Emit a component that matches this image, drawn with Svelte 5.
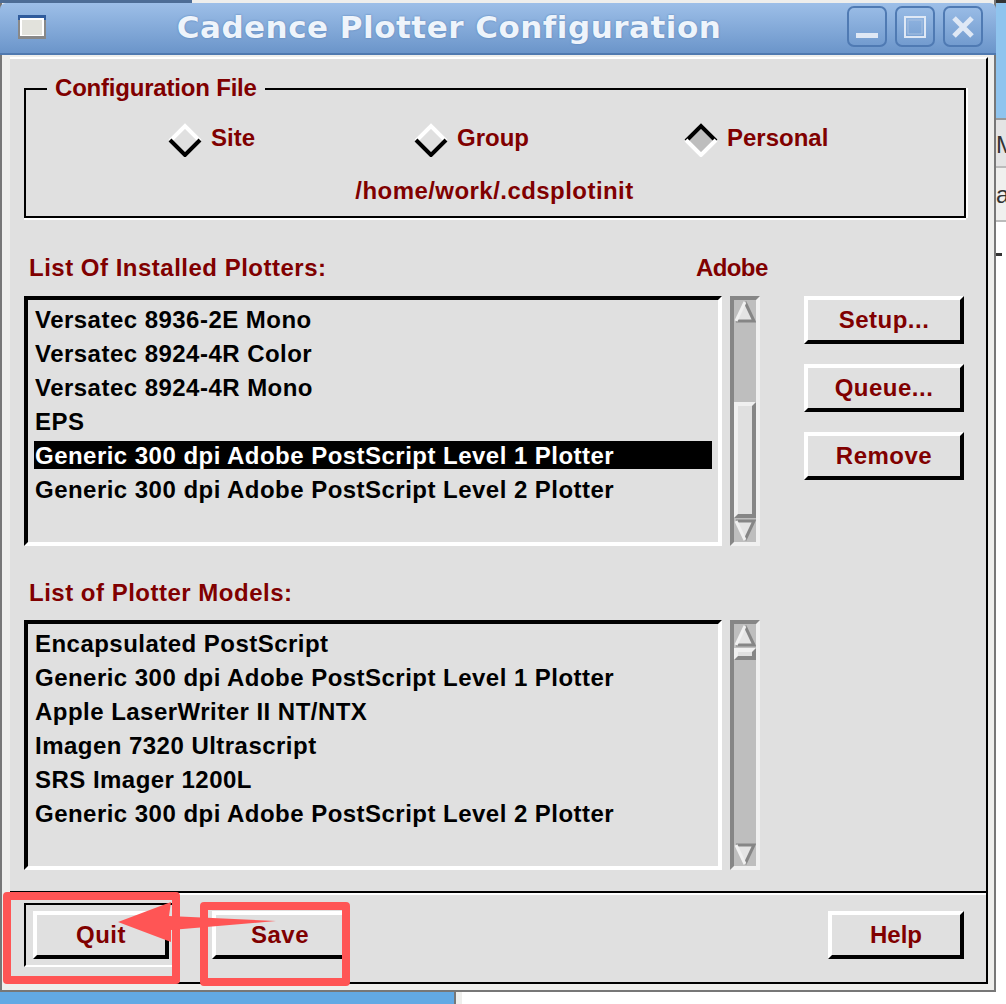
<script>
  const installed = [
    'Versatec 8936-2E Mono',
    'Versatec 8924-4R Color',
    'Versatec 8924-4R Mono',
    'EPS',
    'Generic 300 dpi Adobe PostScript Level 1 Plotter',
    'Generic 300 dpi Adobe PostScript Level 2 Plotter'
  ];
  const models = [
    'Encapsulated PostScript',
    'Generic 300 dpi Adobe PostScript Level 1 Plotter',
    'Apple LaserWriter II NT/NTX',
    'Imagen 7320 Ultrascript',
    'SRS Imager 1200L',
    'Generic 300 dpi Adobe PostScript Level 2 Plotter'
  ];
  const sources = [
    { label: 'Site', on: false },
    { label: 'Group', on: false },
    { label: 'Personal', on: true }
  ];
</script>

{#snippet diamond(on)}
  <svg class="diamond" width="34" height="34" viewBox="0 0 34 34">
    {#if on}<polygon points="17,3 31,17 17,31 3,17" fill="#bebebe" />{/if}
    <polyline points="2,18 17,3 32,18" fill="none" stroke-width="4" stroke={on ? '#000' : '#fff'} />
    <polyline points="2,17 17,32 32,17" fill="none" stroke-width="4" stroke={on ? '#fff' : '#000'} />
  </svg>
{/snippet}

{#snippet scrollbar(before, thumb)}
  <div class="scrollbar">
    <svg class="arrow" width="22" height="24" viewBox="0 0 22 24">
      <polygon points="11,2 20,21 2,21" fill="#e4e4e4" />
      <polyline points="11,2 20,21 2,21" fill="none" stroke="#868686" stroke-width="3" />
      <polyline points="2,21 11,2" fill="none" stroke="#f0f0f0" stroke-width="3" />
    </svg>
    <div style="height: {before}px"></div>
    <div class="thumb" style="height: {thumb}px"></div>
    <div class="rest"></div>
    <svg class="arrow" width="22" height="24" viewBox="0 0 22 24">
      <polygon points="11,22 20,3 2,3" fill="#e4e4e4" />
      <polyline points="2,3 20,3 11,22" fill="none" stroke="#868686" stroke-width="3" />
      <polyline points="2,3 11,22" fill="none" stroke="#f0f0f0" stroke-width="3" />
    </svg>
  </div>
{/snippet}

{#snippet listRow(items, selected)}
  <div class="list">
    {#each items as item, i}
      <div class="item" class:selected={i === selected}>{item}</div>
    {/each}
  </div>
{/snippet}

<div class="desktop">
  <div class="top-strip"></div>
  <div class="window">
    <header class="titlebar">
      <svg class="menu-icon" width="30" height="26" viewBox="0 0 30 26">
        <rect width="28" height="24" x="1" y="1" fill="#888" />
        <rect width="28" height="5" x="1" y="1" fill="#2f5b9c" />
        <rect width="24" height="18" x="3" y="4" fill="#fff" />
        <rect width="20" height="15" x="5" y="6" fill="#e2e2dc" />
      </svg>
      <h1>Cadence Plotter Configuration</h1>
      <div class="controls">
        <div class="control">
          <svg width="36" height="36" viewBox="0 0 36 36"><rect x="7" y="24" width="22" height="5" fill="#dfe8f5" /></svg>
        </div>
        <div class="control">
          <svg width="36" height="36" viewBox="0 0 36 36"><rect x="8" y="8" width="20" height="20" fill="none" stroke="#dfe8f5" stroke-width="2" /><rect x="11" y="11" width="14" height="14" fill="none" stroke="#a9c2e2" stroke-width="1" /></svg>
        </div>
        <div class="control">
          <svg width="36" height="36" viewBox="0 0 36 36"><path d="M9 9 L27 27 M27 9 L9 27" stroke="#dfe8f5" stroke-width="5" /></svg>
        </div>
      </div>
    </header>

    <div class="client">
      <section class="config">
        <span class="legend">Configuration File</span>
        <div class="radios">
          {#each sources as s}
            <div class="radio">
              {@render diamond(s.on)}
              <span>{s.label}</span>
            </div>
          {/each}
        </div>
        <div class="path">/home/work/.cdsplotinit</div>
      </section>

      <div class="list-label first">
        <span>List Of Installed Plotters:</span>
        <span class="vendor">Adobe</span>
      </div>
      <div class="list-row">
        {@render listRow(installed, 4)}
        {@render scrollbar(78, 116)}
        <div class="side-buttons">
          <button>Setup...</button>
          <button>Queue...</button>
          <button>Remove</button>
        </div>
      </div>

      <div class="list-label">
        <span>List of Plotter Models:</span>
      </div>
      <div class="list-row">
        {@render listRow(models, -1)}
        {@render scrollbar(0, 12)}
      </div>

      <footer class="footer">
        <div class="default-ring"><button class="small">Quit</button></div>
        <button class="small save">Save</button>
        <button class="small help">Help</button>
      </footer>
    </div>
  </div>

  <div class="side">
    <div class="side-cell"><span>M</span></div>
    <div class="side-cell tall"><span>a</span></div>
    <div class="tick"></div>
  </div>
  <div class="taskbar"></div>

  <div class="mark mark-quit"></div>
  <div class="mark mark-save"></div>
  <svg class="mark-arrow" width="170" height="50" viewBox="0 0 170 50">
    <polygon points="0,22 53,2 51,16 158,21 53,30 53,42" fill="#ff5555" />
  </svg>
</div>

<style>
  :global(body) {
    margin: 0;
    background: #fff;
  }

  .desktop {
    position: relative;
    width: 1006px;
    height: 1004px;
    overflow: hidden;
    background: linear-gradient(#333 0 3px, #8fc4ee 3px 118px, #fff 118px);
    font-family: "Liberation Sans", Arial, sans-serif;
    font-weight: bold;
    font-size: 24px;
    color: #800000;
  }

  .top-strip {
    position: absolute;
    left: 0;
    top: 0;
    width: 192px;
    height: 3px;
    background: #4d6d96;
  }

  .window {
    width: 996px;
    height: 992px;
    box-sizing: border-box;
    background: #eeeeec;
    border-left: 2px solid #777;
    border-right: 2px solid #777;
    border-bottom: 2px solid #777;
    display: flex;
    flex-direction: column;
  }

  .titlebar {
    height: 50px;
    margin: 3px -2px 0;
    flex: none;
    display: flex;
    align-items: center;
    background: linear-gradient(#9dbfe8, #6b95ca);
    border-bottom: 2px solid #4f79b0;
    border-radius: 6px 6px 0 0;
    position: relative;
  }

  .menu-icon {
    margin-left: 17px;
    margin-top: -2px;
  }

  h1 {
    margin: 0;
    position: absolute;
    left: 0;
    right: 0;
    text-align: center;
    padding-right: 98px;
    margin-top: -2px;
    font-family: "DejaVu Sans", sans-serif;
    font-size: 31px;
    font-weight: bold;
    color: #eef4fb;
    letter-spacing: 0.5px;
    text-shadow: 0 0 2px #4f79b0;
  }

  .controls {
    margin-left: auto;
    margin-right: 13px;
    margin-top: -3px;
    display: flex;
    gap: 8px;
  }

  .control {
    width: 40px;
    height: 41px;
    box-sizing: border-box;
    border: 2px solid #4f7ab3;
    border-radius: 7px;
    display: flex;
    align-items: center;
    justify-content: center;
  }

  .client {
    flex: 1;
    margin: 2px 6px 6px 8px;
    box-sizing: border-box;
    border-top: 2px solid #fff;
    background: #e0e0e0;
    padding: 29px 14px 0;
    border-right: 2px solid #000;
    border-bottom: 2px solid #000;
    display: flex;
    flex-direction: column;
  }

  .config {
    position: relative;
    width: 942px;
    height: 130px;
    box-sizing: border-box;
    border: 2px solid #000;
    box-shadow: 0 2px 0 #fff, 2px 0 0 #fff;
    flex: none;
  }

  .legend {
    position: absolute;
    left: 21px;
    top: -15px;
    padding: 0 8px;
    line-height: 26px;
    background: #e0e0e0;
    white-space: nowrap;
    letter-spacing: -0.2px;
  }

  .radios {
    display: grid;
    grid-template-columns: 246px 270px auto;
    padding: 33px 0 0 142px;
  }

  .radio {
    display: flex;
    align-items: center;
    gap: 9px;
  }

  .radio span {
    line-height: 34px;
    margin-top: -4px;
  }

  .path {
    text-align: center;
    margin: 19px 1px 0 0;
    line-height: 30px;
    letter-spacing: 0.45px;
  }

  .list-label {
    display: flex;
    height: 28px;
    line-height: 28px;
    padding-left: 5px;
    margin-top: 33px;
    margin-bottom: 13px;
    flex: none;
    letter-spacing: 0.5px;
  }

  .list-label.first {
    margin-top: 36px;
    margin-bottom: 14px;
  }

  .vendor {
    position: absolute;
    left: 696px;
    letter-spacing: -0.6px;
  }

  .list-row {
    display: flex;
    flex: none;
    height: 250px;
  }

  .list {
    width: 698px;
    box-sizing: border-box;
    border: 4px solid;
    border-color: #000 #fff #fff #000;
    padding: 3px 6px;
    color: #000;
  }

  .item {
    height: 34px;
    line-height: 33px;
    white-space: nowrap;
    padding-left: 1px;
    letter-spacing: 0.47px;
  }

  .item.selected {
    background: linear-gradient(transparent 2px, #000 2px 30px, transparent 30px);
    color: #fff;
  }

  .scrollbar {
    width: 30px;
    margin-left: 8px;
    box-sizing: border-box;
    border: 4px solid;
    border-color: #868686 #f0f0f0 #f0f0f0 #868686;
    background: #bebebe;
    display: flex;
    flex-direction: column;
  }

  .arrow {
    display: block;
    flex: none;
  }

  .thumb {
    box-sizing: border-box;
    border: 4px solid;
    border-color: #f0f0f0 #868686 #868686 #f0f0f0;
    background: #e0e0e0;
    flex: none;
  }

  .rest {
    flex: 1;
  }

  .side-buttons {
    margin-left: 44px;
    display: flex;
    flex-direction: column;
    gap: 20px;
  }

  button {
    width: 160px;
    height: 48px;
    padding: 0;
    box-sizing: border-box;
    border: 4px solid;
    border-color: #fff #000 #000 #fff;
    background: #e0e0e0;
    color: #800000;
    font: inherit;
    letter-spacing: 0.5px;
    display: block;
  }

  .footer {
    margin: 21px -14px 0;
    border-top: 2px solid #000;
    box-shadow: inset 0 2px 0 #fff;
    flex: 1;
    padding: 10px 22px 0 14px;
    display: flex;
    align-items: flex-start;
  }

  .default-ring {
    width: 152px;
    height: 64px;
    box-sizing: border-box;
    border: 2px solid;
    border-color: #000 #fff #fff #000;
    padding: 6px 0 0 7px;
    flex: none;
  }

  button.small {
    width: 136px;
  }

  .save {
    margin: 8px 0 0 36px;
  }

  .help {
    margin: 8px 0 0 auto;
    letter-spacing: 0;
  }

  .side {
    position: absolute;
    left: 996px;
    top: 118px;
    width: 10px;
    color: #333;
    font-weight: normal;
  }

  .side-cell {
    height: 50px;
    padding-top: 12px;
    box-sizing: border-box;
    background: #e4e4e4;
    border-top: 2px solid #999;
    border-bottom: 2px solid #bbb;
    overflow: hidden;
    line-height: 26px;
  }

  .side-cell.tall {
    height: 54px;
    border-top: 0;
    padding-top: 14px;
    background: #f0f0ee;
  }

  .tick {
    width: 6px;
    height: 3px;
    margin-top: 31px;
    background: #333;
  }

  .taskbar {
    position: absolute;
    left: 0;
    top: 992px;
    width: 454px;
    height: 12px;
    background: #62a9e4;
    border-right: 2px solid #777;
    box-shadow: 6px 0 0 #eeeeec;
  }

  .mark {
    position: absolute;
    box-sizing: border-box;
    border: 8px solid #ff5555;
    border-radius: 4px;
  }

  .mark-quit {
    left: 3px;
    top: 892px;
    width: 177px;
    height: 92px;
  }

  .mark-save {
    left: 200px;
    top: 902px;
    width: 150px;
    height: 84px;
  }

  .mark-arrow {
    position: absolute;
    left: 118px;
    top: 900px;
  }
</style>
